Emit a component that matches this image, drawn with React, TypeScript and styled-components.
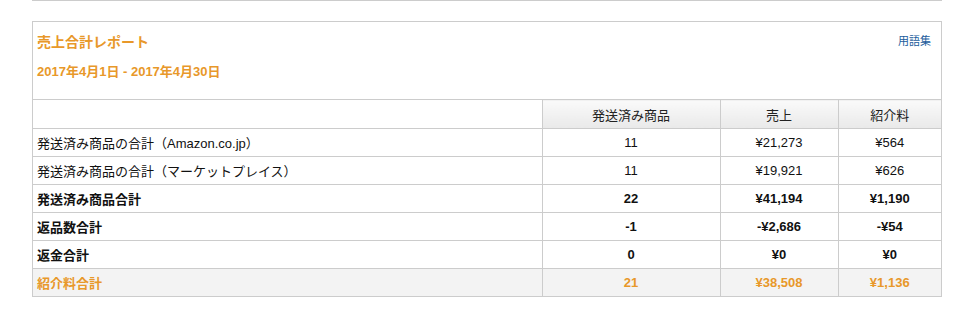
import React from "react";
import styled, { createGlobalStyle } from "styled-components";

const Global = createGlobalStyle`
  html, body { margin: 0; padding: 0; background: #fff; }
  body { font-family: "Liberation Sans", Arial, "Noto Sans CJK JP", sans-serif; color: #111; }
`;

const Page = styled.div`
  width: 910px;
  margin-left: 32px;
`;

const TopRule = styled.div`
  height: 0;
  border-top: 1px solid #cccccc;
`;

const Box = styled.section`
  margin-top: 20px;
  border: 1px solid #cccccc;
`;

const Head = styled.div`
  display: flex;
  justify-content: space-between;
  align-items: flex-start;
  padding: 10px 10px 17px 4px;
`;

const TitleCol = styled.div`
  display: flex;
  flex-direction: column;
  gap: 10px;
`;

const Title = styled.h2`
  margin: 0;
  font-size: 14px;
  line-height: 20px;
  font-weight: bold;
  color: #e8982a;
`;

const DateRange = styled.div`
  font-size: 13px;
  line-height: 20px;
  font-weight: bold;
  color: #e8982a;
`;

const Glossary = styled.a`
  font-size: 11px;
  line-height: 18px;
  margin-top: 0px;
  color: #1b5c9c;
  text-decoration: none;
`;

const Table = styled.table`
  width: 100%;
  border-collapse: collapse;
  table-layout: fixed;
  font-size: 13px;
`;

const HeadCell = styled.th<{ $blank?: boolean }>`
  height: 28px;
  padding: 0;
  font-weight: normal;
  color: #222;
  text-align: center;
  border: 1px solid #cccccc;
  background: ${(p) => (p.$blank ? "#fff" : "linear-gradient(#fafafa, #e9e9e9)")};
  &:first-child { border-left: none; }
  &:last-child { border-right: none; }
`;

const Row = styled.tr<{ $bold?: boolean; $total?: boolean }>`
  background: ${(p) => (p.$total ? "#f3f3f3" : "#fff")};
  color: ${(p) => (p.$total ? "#e8982a" : "#111")};
  font-weight: ${(p) => (p.$bold ? "bold" : "normal")};
  &:last-child td { border-bottom: none; }
`;

const Cell = styled.td<{ $label?: boolean }>`
  height: 27px;
  padding: 0 0 0 4px;
  text-align: ${(p) => (p.$label ? "left" : "center")};
  ${(p) => (p.$label ? "" : "padding: 0;")}
  border: 1px solid #cccccc;
  white-space: nowrap;
  &:first-child { border-left: none; }
  &:last-child { border-right: none; }
`;

type R = { label: string; a: string; b: string; c: string; bold?: boolean; total?: boolean };

const rows: R[] = [
  { label: "発送済み商品の合計（Amazon.co.jp）", a: "11", b: "¥21,273", c: "¥564" },
  { label: "発送済み商品の合計（マーケットプレイス）", a: "11", b: "¥19,921", c: "¥626" },
  { label: "発送済み商品合計", a: "22", b: "¥41,194", c: "¥1,190", bold: true },
  { label: "返品数合計", a: "-1", b: "-¥2,686", c: "-¥54", bold: true },
  { label: "返金合計", a: "0", b: "¥0", c: "¥0", bold: true },
  { label: "紹介料合計", a: "21", b: "¥38,508", c: "¥1,136", bold: true, total: true },
];

export default function App() {
  return (
    <Page>
      <Global />
      <TopRule />
      <Box>
        <Head>
          <TitleCol>
            <Title>売上合計レポート</Title>
            <DateRange>2017年4月1日 - 2017年4月30日</DateRange>
          </TitleCol>
          <Glossary href="#">用語集</Glossary>
        </Head>
        <Table>
          <colgroup>
            <col style={{ width: 509 }} />
            <col style={{ width: 178 }} />
            <col style={{ width: 118 }} />
            <col style={{ width: 103 }} />
          </colgroup>
          <thead>
            <tr>
              <HeadCell $blank />
              <HeadCell>発送済み商品</HeadCell>
              <HeadCell>売上</HeadCell>
              <HeadCell>紹介料</HeadCell>
            </tr>
          </thead>
          <tbody>
            {rows.map((r) => (
              <Row key={r.label} $bold={r.bold} $total={r.total}>
                <Cell $label>{r.label}</Cell>
                <Cell>{r.a}</Cell>
                <Cell>{r.b}</Cell>
                <Cell>{r.c}</Cell>
              </Row>
            ))}
          </tbody>
        </Table>
      </Box>
    </Page>
  );
}
